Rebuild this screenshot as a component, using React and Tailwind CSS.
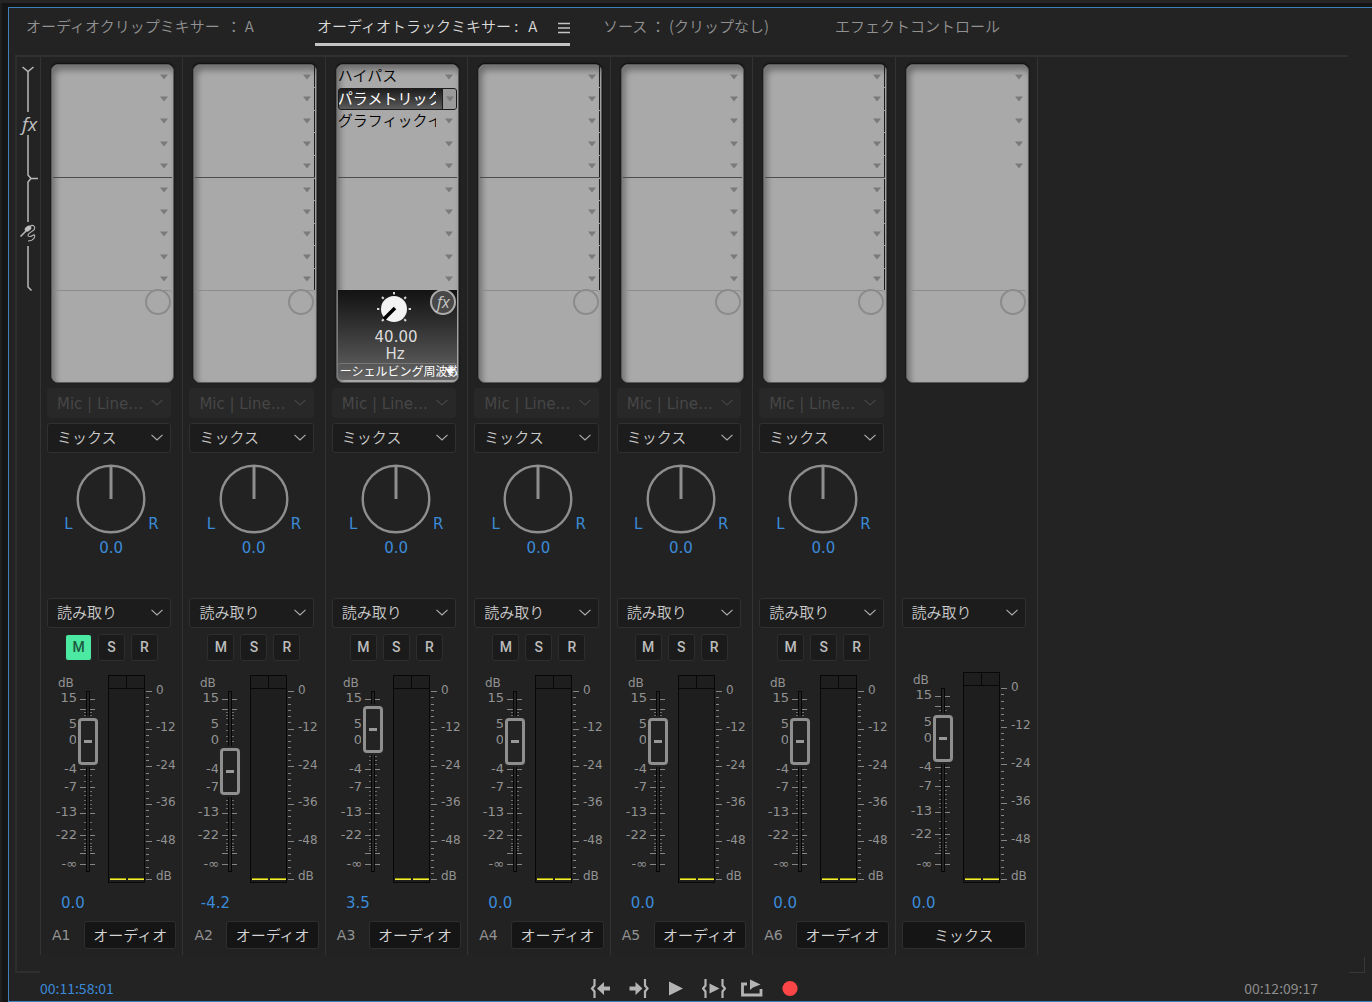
import { useState } from 'react'
import clsx from 'clsx'

const TRACKS = [
  { id: 'A1', name: 'オーディオ', level: '0.0', fader: 123, muted: true },
  { id: 'A2', name: 'オーディオ', level: '-4.2', fader: 93, sends: true },
  {
    id: 'A3', name: 'オーディオ', level: '3.5', fader: 135, selected: 1,
    effects: ['ハイパス', 'パラメトリックイコライザー', 'グラフィックイコライザー'],
  },
  { id: 'A4', name: 'オーディオ', level: '0.0', fader: 123, sends: true },
  { id: 'A5', name: 'オーディオ', level: '0.0', fader: 123 },
  { id: 'A6', name: 'オーディオ', level: '0.0', fader: 123, sends: true },
  { id: 'mix', name: 'ミックス', level: '0.0', fader: 126, master: true },
]

// y positions inside the 218px tall level drawing
const FADER_MAJOR = [29, 39, 99, 117, 143, 165, 183, 194]
const FADER_MINOR = [42, 45, 48, 54, 60, 66, 71, 78, 86, 90, 94, 105, 111, 121, 125, 130, 134, 138, 152, 159, 169, 173, 176, 178, 180]
const FADER_LABELS = [['15', 28], ['5', 54], ['0', 70], ['-4', 99], ['-7', 117], ['-13', 142], ['-22', 165], ['-∞', 194]]
const METER_LABELS = [['0', 20], ['-12', 57], ['-24', 95], ['-36', 132], ['-48', 170], ['dB', 206]]

/* ---------- small drawings ---------- */

function Chevron({ className }) {
  return (
    <svg viewBox="0 0 12 7" className={clsx('pointer-events-none w-3 h-[7px]', className)} fill="none" stroke="currentColor" strokeWidth="1.1">
      <path d="M0.5 0.8 L6 6 L11.5 0.8" />
    </svg>
  )
}

function Dropdown({ label, value, options = [], disabled }) {
  return (
    <div className="relative ml-1.5 mr-[11px]">
      <select
        aria-label={label}
        disabled={disabled}
        defaultValue={value}
        className={clsx(
          'block w-full h-[30px] appearance-none rounded-[3px] border pl-[9px] pr-5 text-[15px] outline-none',
          disabled ? 'bg-[#282828] border-[#282828] pt-0.5 text-[#464646]' : 'bg-[#1c1c1c] border-[#303030] font-[350] text-[#cbcbcb]'
        )}
      >
        <option>{value}</option>
        {options.map(o => <option key={o}>{o}</option>)}
      </select>
      <Chevron className={clsx('absolute right-2 top-[11px]', disabled ? 'text-[#464646]' : 'text-[#b0b0b0]')} />
    </div>
  )
}

function SignalRail() {
  return (
    <svg width="24" height="235" viewBox="17 62 24 235" fill="none" stroke="#b8b8b8" strokeWidth="1.5">
      <path d="M22.5 67 L28 71.5 L33.5 67 M28 71 V112" />
      <text x="22" y="131" fill="#c0c0c0" stroke="none" className="font-['Open_Sans'] italic text-[19px]">fx</text>
      <path d="M28 135 V175 L31 178.5 L28 182 V222 M31 178.5 H38" />
      <path d="M28 246 V287 L31.5 290.5" />
      {/* microphone with its cord */}
      <path d="M20.5 236.5 L26 231" strokeWidth="1.6" />
      <ellipse cx="28" cy="228.6" rx="3.6" ry="2.5" fill="#c0c0c0" stroke="none" transform="rotate(-38 28 228.6)" />
      <path d="M30 226 C33 224.6 35.5 226 34.5 229 C33.5 231.5 28.5 232.5 28 235 C27.8 237 31.5 237 33 235.2 C34.5 234 35.5 236 34 238.2 C32.6 240.2 30 241 28 241" strokeWidth="1.1" />
    </svg>
  )
}

/* ---------- rack ---------- */

function Slot({ text, active, dashed }) {
  return (
    <div
      className={clsx(
        'flex items-stretch mt-px overflow-hidden',
        dashed && 'border-r border-[#1c1c1c]',
        active && 'rounded-[3px] border border-[#1c1c1c] bg-linear-to-b from-[#1d1d1d] to-[#5c5c5c] text-white'
      )}
    >
      <span className={clsx('w-[98px] flex-none overflow-hidden whitespace-nowrap text-[15px] leading-[20px]', active ? '-ml-px text-white' : 'font-[350] text-black')}>
        {text}
      </span>
      <button
        aria-label="エフェクトの選択"
        className={clsx('ml-auto flex w-[14px] flex-none items-center justify-center', active ? 'border-l border-[#1c1c1c] bg-[#9b9b9b]' : !dashed && 'mr-px')}
      >
        <svg width="8" height="6" viewBox="0 0 8 6"><path d="M0 0.5 H8 L4 5.5 Z" fill="#7a7a7a" /></svg>
      </button>
    </div>
  )
}

function EffectParam() {
  return (
    <div className="flex flex-1 flex-col overflow-hidden rounded-b-[4px] bg-linear-to-b from-[#131313] to-[#666] text-center text-[15px] leading-[17px] text-[#dcdcdc]">
      <svg width="36" height="36" viewBox="-18 -18 36 36" className="mt-px ml-[38px] block flex-none" aria-hidden="true">
        {[-135, -90, -45, 0, 45, 90, 135].map(a => (
          <rect key={a} x="-1" y="-17" width="2" height="2.4" fill="#d8d8d8" transform={`rotate(${a})`} />
        ))}
        <circle r="13" fill="#f3f3f3" />
        <path d="M1 -1 L-10 10" stroke="#000" strokeWidth="3.6" />
      </svg>
      <span className="mt-0.5 pr-[3px]">40.00</span>
      <span className="pr-[5px]">Hz</span>
      <button className="relative flex-1 overflow-hidden rounded-t-[3px] border-t border-[#777] pl-0.5 text-left text-[12px] leading-[15px] whitespace-nowrap text-white">
        ーシェルビング周波数
        <svg width="10" height="7" viewBox="0 0 10 7" className="absolute right-0.5 top-1"><path d="M0 0.5 H10 L5 6.5 Z" fill="#fff" /></svg>
      </button>
    </div>
  )
}

function Rack({ track }) {
  const slots = [0, 1, 2, 3, 4]
  const fx = track.effects || []
  return (
    <div className="relative mt-[7px] ml-[10px] mr-2 flex h-[319px] flex-col rounded-[7px] border border-[#5a5a5a] bg-[#a9a9a9] px-px pb-0.5 shadow-[inset_3px_5px_6px_rgba(0,0,0,0.35),0_-1px_2px_#0c0c0c]">
      <div className="grid h-[112px] grid-rows-5">
        {slots.map(i => <Slot key={i} text={fx[i]} active={track.selected === i} dashed={track.sends} />)}
      </div>
      <div className={clsx('grid h-[113px] grid-rows-5', !track.master && 'border-t border-[#4c4c4c]')}>
        {!track.master && slots.map(i => <Slot key={i} dashed={track.sends} />)}
      </div>
      {fx.length > 0 ? <EffectParam /> : <div className="flex-1 rounded-t-[4px] border-t border-[#8c8c8c]" />}
      <span
        className={clsx(
          'absolute right-0.5 top-[224px] flex h-[26px] w-[26px] items-center justify-center rounded-full border-2',
          fx.length > 0 ? 'border-[#ababab] bg-[#484848]' : 'border-[#8b8b8b]'
        )}
      >
        {fx.length > 0 && <i className="font-['Open_Sans'] text-[16px] leading-none text-[#c6c6c6]">fx</i>}
      </span>
    </div>
  )
}

/* ---------- pan, automation, level ---------- */

function Pan({ id }) {
  const [pan, setPan] = useState(0)
  return (
    <div className="flex h-[145px] flex-col items-center pt-[11px] pr-px text-[15px] text-[#3b8ad8]">
      <div className="flex items-end">
        <span className="w-3 leading-[20px]">L</span>
        <label className="relative">
          <svg width="70" height="70" viewBox="-35 -35 70 70" fill="none" stroke="#8e8e8e">
            <circle r="33.3" strokeWidth="2.4" />
            <path d="M0 0 V-33" strokeWidth="3" transform={`rotate(${pan * 1.35})`} />
          </svg>
          <input
            type="range" min="-100" max="100" value={pan}
            onChange={e => setPan(Number(e.target.value))}
            aria-label={`${id} パン`}
            className="absolute inset-0 h-full w-full opacity-0"
          />
        </label>
        <span className="w-3 pl-0.5 leading-[20px]">R</span>
      </div>
      <span className="mt-1 leading-[20px]">{pan.toFixed(1)}</span>
    </div>
  )
}

function TrackButtons({ muted }) {
  const [on, setOn] = useState({ M: muted })
  return ['M', 'S', 'R'].map(k => (
    <button
      key={k}
      aria-pressed={!!on[k]}
      onClick={() => setOn({ ...on, [k]: !on[k] })}
      className={clsx(
        "h-[27px] w-[27px] rounded-[3px] border font-['Roboto'] text-[14px] font-medium",
        on[k] ? 'border-[#232323] bg-[#4be9a2] text-[#1d5a3f]' : 'border-[#2e2e2e] bg-[#1b1b1b] text-[#bdbdbd]'
      )}
    >
      {k}
    </button>
  ))
}

function Level({ track }) {
  const [pos, setPos] = useState(track.fader)
  // the master drawing is 3px taller, growing upwards
  const y = v => (track.master ? Math.round(213 - (213 - v) * 211 / 208) : v)
  const top = y(5)
  return (
    <div className="relative -ml-px">
      <svg width="138" height="218" className="block" aria-hidden="true">
        <g fill="#929292">
          <text x="18" y={y(17)} className="text-[12px]">dB</text>
          {FADER_LABELS.map(([t, v]) => <text key={t} x="37" y={y(v) + 4} textAnchor="end" className="text-[13px]">{t}</text>)}
          {METER_LABELS.map(([t, v]) => <text key={t} x="116" y={y(v) + 4} className="text-[12px]">{t}</text>)}
        </g>
        <g fill="#858585">
          {FADER_MAJOR.map(v => <rect key={v} x="40" y={y(v)} width="15" height="1" />)}
          {FADER_MINOR.map(v => <rect key={v} x="44" y={y(v)} width="8" height="1" fill="#6c6c6c" />)}
          {Array.from({ length: 31 }, (_, i) => (
            <rect key={i} x="106" y={y(Math.round(21 + i * 6.27))} width={i % 6 ? 3 : 6} height="1" />
          ))}
        </g>
        <rect x="46.5" y={y(21) + 0.5} width="3" height={201 - y(21)} fill="#232323" stroke="#060606" />
        <rect x="68.5" y={top + 0.5} width="36" height={212 - top} fill="#1e1e1e" stroke="#080808" />
        <path d={`M68 ${y(18) + 0.5} H105 M86.5 ${top} V${y(18)}`} stroke="#080808" />
        <path d="M70 208.5 H86 M88 208.5 H104" stroke="#a09c10" />
        <path d="M70 209.5 H86 M88 209.5 H104" stroke="#f2ee3a" />
      </svg>
      <input
        type="range" min="0" max="166" value={pos}
        onChange={e => setPos(Number(e.target.value))}
        aria-label={`${track.id} ボリューム`}
        className="absolute left-[38px] top-[5px] m-0 h-[213px] w-5 appearance-none bg-transparent [writing-mode:vertical-lr] [direction:rtl] [&::-webkit-slider-thumb]:h-[47px] [&::-webkit-slider-thumb]:w-5 [&::-webkit-slider-thumb]:appearance-none [&::-webkit-slider-thumb]:rounded-[4px] [&::-webkit-slider-thumb]:border-[3px] [&::-webkit-slider-thumb]:border-[#8f8f8f] [&::-webkit-slider-thumb]:bg-[#232323] [&::-webkit-slider-thumb]:bg-[linear-gradient(#999,#999)] [&::-webkit-slider-thumb]:bg-[length:8px_3px] [&::-webkit-slider-thumb]:bg-center [&::-webkit-slider-thumb]:bg-no-repeat [&::-webkit-slider-thumb]:shadow-[0_0_0_2px_#232323]"
      />
    </div>
  )
}

function Strip({ track }) {
  return (
    <section className="min-w-0 border-l border-[#333] pb-1.5">
      <Rack track={track} />
      {track.master ? (
        <div className="h-[215px]" />
      ) : (
        <>
          <div className="h-[5px]" />
          <Dropdown label="入力" value="Mic | Line…" disabled />
          <div className="h-[5px]" />
          <Dropdown label="出力" value="ミックス" />
          <Pan id={track.id} />
        </>
      )}
      <Dropdown label="オートメーション" value="読み取り" options={['オフ', 'ラッチ', 'タッチ', '書き込み']} />
      <div className="mt-1.5 flex h-[27px] gap-1.5 pl-6">
        {!track.master && <TrackButtons muted={track.muted} />}
      </div>
      <div className="mt-[9px]">
        <Level track={track} />
      </div>
      <div className={clsx('mt-[5px] text-center text-[15px] leading-[20px] text-[#3b8ad8]', track.master ? 'w-14' : 'w-16')}>{track.level}</div>
      <div className="ml-1.5 mr-[11px] mt-2 flex h-7 items-center">
        {!track.master && <span className="w-[37px] pl-[5px] text-[14px] text-[#929292]">{track.id}</span>}
        <input
          aria-label="トラック名"
          defaultValue={track.name}
          className={clsx('h-7 min-w-0 flex-1 rounded-[3px] border border-[#2e2e2e] bg-[#151515] pb-0.5 text-center text-[15px] font-[350] text-[#d6d6d6] outline-none', !track.master && '-mr-[5px]')}
        />
      </div>
    </section>
  )
}

/* ---------- transport ---------- */

const TRANSPORT = [
  ['インポイントへ移動', <path key="p" d="M6.5 1 V7.5 L4 10.5 L6.5 13.5 V20" fill="none" stroke="currentColor" strokeWidth="2.2" />, <path key="a" d="M9 10.5 L16 4 V8.5 H22 V12.5 H16 V17 Z" />],
  ['アウトポイントへ移動', <path key="p" d="M19 1 V7.5 L21.5 10.5 L19 13.5 V20" fill="none" stroke="currentColor" strokeWidth="2.2" />, <path key="a" d="M16.5 10.5 L9.5 4 V8.5 H3.5 V12.5 H9.5 V17 Z" />],
  ['再生', <path key="p" d="M5 3.5 L19 10.5 L5 17.5 Z" />],
  ['インからアウトへ再生', <path key="p" d="M3.5 1 V7.5 L1 10.5 L3.5 13.5 V20 M20.5 1 V7.5 L23 10.5 L20.5 13.5 V20" fill="none" stroke="currentColor" strokeWidth="2.2" />, <path key="a" d="M7.5 5.5 L17.5 10.5 L7.5 15.5 Z" />],
  ['ループ', <path key="p" d="M7 6 H2.5 V17 H21 V11" fill="none" stroke="currentColor" strokeWidth="2.8" />, <path key="a" d="M10 1.5 L20.5 6.5 L13 9.5 L10 12 Z" />],
  ['録音', <circle key="p" cx="12" cy="10.5" r="7.6" fill="#fb4546" />],
]

export default function App() {
  return (
    <div className="flex min-h-screen flex-col bg-[#151515] font-['DejaVu_Sans','Noto_Sans_CJK_JP',sans-serif]">
      <div className="h-[3px] bg-[#262424]" />
      <div className="flex flex-1 border-l-2 border-[#1f1f1f] pl-1.5 pt-1">
        <main className="flex min-w-0 flex-1 flex-col border-y border-l border-[#3f7fbd] bg-[#232323]">
          <nav className="flex h-[47px] gap-8 overflow-hidden pl-[17px] font-['Noto_Sans_CJK_JP',sans-serif] text-[15px] font-[350] whitespace-pre text-[#929292]">
            <button className="h-[38px] w-[257px] flex-none pb-0.5 text-left">オーディオクリップミキサー  ： A</button>
            <button className="flex h-[38px] w-[255px] flex-none items-center justify-between border-b-[3px] border-[#c4c4c4] pt-px pl-0.5 text-[#dadada]">
              {'オーディオトラックミキサー :   A'}
              <svg width="12" height="12" viewBox="0 0 12 12" className="mt-1"><path d="M0 1.5 H12 M0 6 H12 M0 10.5 H12" stroke="#c4c4c4" strokeWidth="1.4" /></svg>
            </button>
            <button className="h-[38px] w-[201px] flex-none pb-0.5 pl-px text-left">ソース ： (クリップなし)</button>
            <button className="h-[38px] flex-none pb-0.5 text-left">エフェクトコントロール</button>
          </nav>

          <div className="ml-1.5 mr-6 h-0.5 bg-[#303030]" />
          <div className="flex flex-1 pl-1.5 pr-[7px]">
            <div className="w-[25px] flex-none border-b-2 border-l-2 border-[#2e2e2e] pt-[5px]">
              <SignalRail />
            </div>
            <div className="grid max-w-[998px] flex-1 grid-cols-7 self-start border-r border-[#333] bg-[#222]">
              {TRACKS.map(t => <Strip key={t.id} track={t} />)}
            </div>
            <div className="ml-auto h-4 w-4 self-end border-b border-r border-[#383838]" />
          </div>

          <footer className="grid h-7 grid-cols-[1fr_auto_1fr] items-center pt-0.5 font-['Noto_Sans_CJK_JP',sans-serif] text-[14px]">
            <span className="pl-[31px] pt-px text-[#3b8ad8]">00:11:58:01</span>
            <div className="flex pl-2 text-[#b4b4b4]">
              {TRANSPORT.map(([label, ...shapes]) => (
                <button key={label} aria-label={label} className="flex w-[38px] justify-center">
                  <svg width="24" height="21" viewBox="0 0 24 21" fill="currentColor">{shapes}</svg>
                </button>
              ))}
            </div>
            <span className="pr-[54px] pt-px text-right text-[#8c8c8c]">00:12:09:17</span>
          </footer>
        </main>
      </div>
    </div>
  )
}
